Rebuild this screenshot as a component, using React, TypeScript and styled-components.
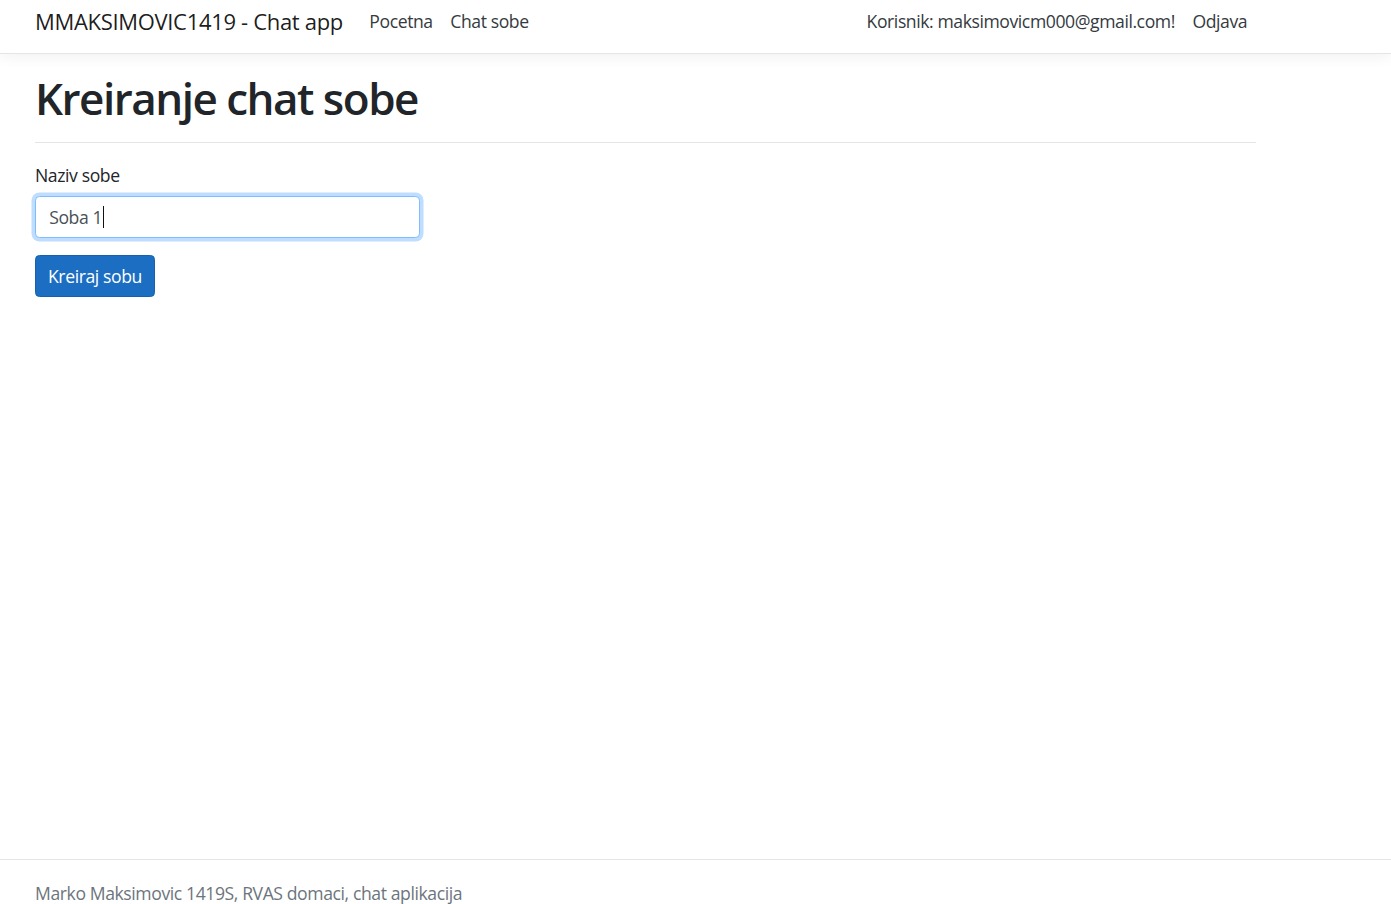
import React from "react";
import styled, { createGlobalStyle } from "styled-components";

const GlobalStyle = createGlobalStyle`
  html, body {
    margin: 0;
    padding: 0;
    background: #ffffff;
  }
  body {
    font-family: "Open Sans", "Noto Sans", sans-serif;
    font-size: 17.6px;
    line-height: 1.5;
    color: #212529;
    overflow: hidden;
  }
  * { box-sizing: border-box; }
`;

const Page = styled.div`
  height: 904px;
  display: flex;
  flex-direction: column;
`;

const Header = styled.header`
  flex-shrink: 0;
  height: 54px;
  border-bottom: 1px solid #e5e5e5;
  box-shadow: 0 4.4px 13.2px rgba(0, 0, 0, 0.05);
  position: relative;
  z-index: 1;
  background: #fff;
`;

const NavBar = styled.nav`
  width: 1256px;
  padding-left: 35px;
  height: 43px;
  display: flex;
  align-items: center;
`;

const Brand = styled.a`
  font-size: 22px;
  line-height: 33px;
  letter-spacing: -0.32px;
  color: rgba(0, 0, 0, 0.9);
  text-decoration: none;
  margin-right: 17.6px;
  white-space: nowrap;
`;

const NavList = styled.ul<{ $right?: boolean }>`
  list-style: none;
  margin: 0;
  margin-left: ${(p) => (p.$right ? "auto" : "0")};
  padding: 0;
  display: flex;
  align-items: center;
`;

const NavItem = styled.li`
  padding: 0 8.8px;
  font-size: 17.6px;
  line-height: 26.4px;
  letter-spacing: -0.42px;
  color: #343a40;
  white-space: nowrap;
`;

const NavLink = styled.a`
  color: #343a40;
  text-decoration: none;
`;

const Main = styled.main`
  flex: 1;
  width: 1256px;
  padding-left: 35px;
  padding-top: 18px;
`;

const Title = styled.h1`
  margin: 0;
  font-size: 44px;
  line-height: 52.8px;
  font-weight: 600;
  letter-spacing: -1.5px;
  color: #212529;
`;

const Rule = styled.hr`
  margin: 17px 0 19px;
  border: 0;
  border-top: 1px solid rgba(0, 0, 0, 0.1);
  height: 0;
`;

const FormGroup = styled.div`
  width: 385px;
  margin-bottom: 17px;
`;

const Label = styled.label`
  display: block;
  margin-bottom: 8px;
  font-size: 17.6px;
  line-height: 26.4px;
  letter-spacing: -0.4px;
  color: #212529;
`;

const Field = styled.div`
  display: flex;
  align-items: center;
  height: 42px;
  padding: 0 13.2px;
  border: 1px solid #80bdff;
  border-radius: 4.4px;
  box-shadow: 0 0 0 3.5px rgba(0, 123, 255, 0.25);
  font-size: 17.6px;
  line-height: 26.4px;
  letter-spacing: -0.4px;
  color: #495057;
  background: #fff;
`;

const Caret = styled.span`
  display: inline-block;
  width: 1px;
  height: 22px;
  margin-left: 1px;
  background: #111;
`;

const Button = styled.button`
  display: flex;
  align-items: center;
  justify-content: center;
  height: 42px;
  width: 120px;
  padding: 0;
  font-family: inherit;
  font-size: 17.6px;
  line-height: 26.4px;
  letter-spacing: -0.4px;
  white-space: nowrap;
  color: #fff;
  background: #1b6ec2;
  border: 1px solid #1861ac;
  border-radius: 4.4px;
  cursor: pointer;
`;

const Footer = styled.footer`
  flex-shrink: 0;
  height: 45px;
  border-top: 1px solid #e5e5e5;
  padding: 20px 0 0 35px;
  font-size: 17.6px;
  line-height: 26.4px;
  letter-spacing: -0.41px;
  color: #6c757d;
  white-space: nowrap;
`;

export default function App() {
  return (
    <>
      <GlobalStyle />
      <Page>
        <Header>
          <NavBar>
            <Brand href="#">MMAKSIMOVIC1419 - Chat app</Brand>
            <NavList>
              <NavItem>
                <NavLink href="#">Pocetna</NavLink>
              </NavItem>
              <NavItem>
                <NavLink href="#">Chat sobe</NavLink>
              </NavItem>
            </NavList>
            <NavList $right>
              <NavItem>Korisnik: maksimovicm000@gmail.com!</NavItem>
              <NavItem>
                <NavLink href="#">Odjava</NavLink>
              </NavItem>
            </NavList>
          </NavBar>
        </Header>
        <Main>
          <Title>Kreiranje chat sobe</Title>
          <Rule />
          <FormGroup>
            <Label>Naziv sobe</Label>
            <Field>
              Soba 1<Caret />
            </Field>
          </FormGroup>
          <Button type="button">Kreiraj sobu</Button>
        </Main>
        <Footer>Marko Maksimovic 1419S, RVAS domaci, chat aplikacija</Footer>
      </Page>
    </>
  );
}
